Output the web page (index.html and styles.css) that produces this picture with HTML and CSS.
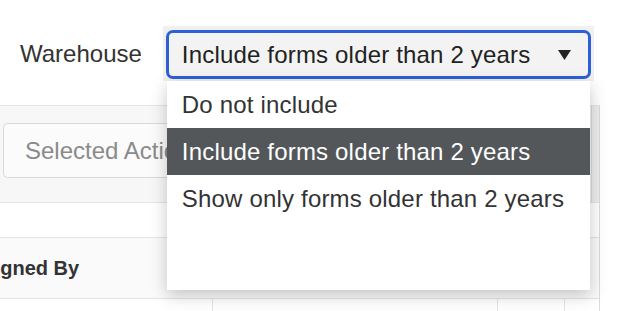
FILE: index.html
```html
<!DOCTYPE html>
<html>
<head>
<meta charset="utf-8">
<link rel="stylesheet" href="styles.css">
</head>
<body>
<div class="page">
  <div class="filter">
    <span class="label">Warehouse</span>
    <div class="select-wrap">
      <div class="select">
        <span class="value">Include forms older than 2 years</span>
        <svg class="arrow" width="13" height="10" viewBox="0 0 13 10"><polygon points="0,0 13,0 6.5,10" fill="#222"/></svg>
      </div>
      <ul class="menu">
        <li class="opt">Do not include</li>
        <li class="opt active">Include forms older than 2 years</li>
        <li class="opt">Show only forms older than 2 years</li>
      </ul>
    </div>
  </div>
  <div class="panel">
    <div class="toolbar">
      <div class="search">Selected Actions</div>
      <div class="scroll"></div>
    </div>
    <div class="row blank"></div>
    <div class="row head"><span class="th">Assigned By</span></div>
    <div class="row cells">
      <div class="cell"></div>
      <div class="cell"></div>
      <div class="cell"></div>
      <div class="cell last"></div>
    </div>
  </div>
</div>
</body>
</html>
```
FILE: styles.css
```css
html, body {
  margin: 0;
  padding: 0;
  background: #fff;
  font-family: "Liberation Sans", Arial, sans-serif;
  overflow: hidden;
}
.page {
  width: 621px;
  height: 311px;
  position: relative;
}
.filter {
  display: flex;
  align-items: center;
  padding: 26px 0 24px 20px;
  height: 55px;
}
.label {
  font-size: 24px;
  color: #333;
  margin-right: 21px;
}
.select-wrap {
  position: relative;
  width: 431px;
  height: 55px;
  box-sizing: border-box;
  padding: 4px 3px 2px 3px;
  background: #f0f0f0;
  z-index: 5;
}
.select {
  height: 49px;
  box-sizing: border-box;
  border: 3px solid #2d60d5;
  border-radius: 7px;
  background: #f3f3f3;
  display: flex;
  align-items: center;
  justify-content: space-between;
  padding: 0 17px 0 13px;
}
.value {
  font-size: 24px;
  letter-spacing: 0.18px;
  color: #222;
}
.arrow {
  display: block;
}
.menu {
  position: absolute;
  top: 55px;
  left: 4px;
  width: 423px;
  height: 209px;
  margin: 0;
  padding: 0;
  list-style: none;
  background: #fff;
  box-shadow: 0 5px 16px rgba(0,0,0,0.22);
}
.opt {
  height: 47px;
  line-height: 47px;
  padding-left: 15px;
  font-size: 24px;
  letter-spacing: 0.18px;
  color: #333;
}
.opt.active {
  background: #53575a;
  color: #fff;
}
.panel {
  width: 600px;
  box-sizing: border-box;
  border-top: 1px solid #e4e4e4;
  border-right: 1px solid #dcdcdc;
  background: #f7f7f7;
  height: 206px;
}
.toolbar {
  display: flex;
  justify-content: space-between;
  align-items: flex-start;
  height: 96px;
}
.search {
  margin: 17px 0 0 3px;
  width: 170px;
  height: 55px;
  box-sizing: border-box;
  border: 1px solid #d9d9d9;
  border-right: none;
  border-radius: 5px 0 0 5px;
  background: #fbfbfb;
  padding-left: 21px;
  font-size: 24px;
  line-height: 53px;
  color: #8a8a8a;
  white-space: nowrap;
  overflow: hidden;
}
.scroll {
  width: 7px;
  height: 96px;
  background: #ededed;
  border-left: 1px solid #dadada;
}
.row {
  border-top: 1px solid #e4e4e4;
  box-sizing: border-box;
}
.row.blank {
  height: 35px;
  background: #fff;
}
.row.head {
  height: 61px;
  background: #fafafa;
  display: flex;
  align-items: center;
  overflow: hidden;
}
.th {
  font-size: 20px;
  font-weight: bold;
  color: #333;
  margin-left: -42px;
  white-space: nowrap;
}
.row.cells {
  height: 14px;
  background: #fff;
  display: grid;
  grid-template-columns: 213px 285px 67px 1fr;
}
.cell {
  border-right: 1px solid #e4e4e4;
}
.cell.last {
  border-right: none;
}
```
